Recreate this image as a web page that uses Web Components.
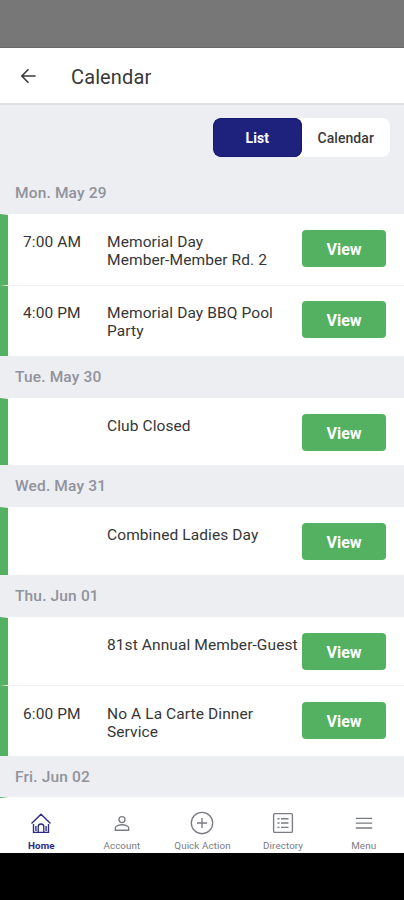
<!DOCTYPE html>
<html lang="en">
<head>
<meta charset="utf-8">
<title>Calendar</title>
<style>
html,body{margin:0;height:100%;background:#000;font-family:Roboto,"Liberation Sans",sans-serif;overflow:hidden}
</style>
</head>
<body>
<club-app></club-app>
<script>
const define = (name, markup, setup) => {
  const tpl = document.createElement('template');
  tpl.innerHTML = markup;
  customElements.define(name, class extends HTMLElement {
    constructor() {
      super();
      this.attachShadow({mode: 'open'}).append(tpl.content.cloneNode(true));
    }
    connectedCallback() { if (setup) setup(this, this.shadowRoot); }
  });
};

define('app-header', `
<style>
:host{display:flex;align-items:center;height:55px;flex:none;background:#fff;border-bottom:2px solid #e0e1e4;box-sizing:content-box;color:#383838;padding-left:20px;gap:35px}
svg{display:block;width:16px;height:16px}
h1{margin:0;font-size:20px;font-weight:400;letter-spacing:.12px;line-height:24px;padding-top:3px}
</style>
<svg viewBox="0 0 16 16" fill="none" stroke="#3c3c3c" stroke-width="1.6"><path d="M8.5 1.2 1.8 8l6.7 6.8M2 8h13.6"/></svg>
<h1><slot></slot></h1>`);

define('view-switch', `
<style>
:host{display:flex;box-sizing:border-box;width:177px;height:39px;border-radius:8px;background:#fff;overflow:hidden;font-size:14px;font-weight:500;letter-spacing:.05px;color:#3a3a3a}
span{flex:1;display:flex;align-items:center;justify-content:center}
.on{background:#1e227c;color:#fff;border-radius:8px;font-weight:700;box-shadow:inset 0 0 0 1px #141873}
</style>
<span class="on"><slot name="on"></slot></span><span><slot></slot></span>`);

define('day-group', `
<style>
:host{display:block}
h2{margin:0;height:var(--head,42px);box-sizing:border-box;padding:0 15px;display:flex;align-items:center;font-size:15.5px;font-weight:500;letter-spacing:.15px;color:#91929b}
</style>
<h2></h2><slot></slot>`, (el, root) => { root.querySelector('h2').textContent = el.getAttribute('day'); });

define('view-button', `
<style>
:host{display:block}
button{display:block;width:84px;height:37px;padding:2px 0 0;border:0;border-radius:4px;background:#53b161;color:#fff;font:700 16px Roboto,sans-serif;letter-spacing:0}
</style>
<button><slot></slot></button>`);

define('event-row', `
<style>
:host{display:grid;grid-template-columns:84px 195px 84px;box-sizing:border-box;height:var(--h,67px);padding-left:15px;border-left:8px solid #53b161;background:#fff;color:#363636;font-size:15.5px;line-height:18px;letter-spacing:.1px;position:relative}
:host([divided]){box-shadow:inset 0 1px #f3f3f5}
:host::before{content:"";position:absolute;left:-8px;top:0;border-style:solid;border-width:1.5px 8px 0 0;border-color:#eceef2 transparent transparent;transform:scaleX(-1)}
:host([divided])::before{border-top-color:#fff}
time,p{margin:0;padding-top:calc(18.5px + var(--shift,0px))}
p{white-space:pre}
view-button{padding-top:calc(16px + var(--shift,0px))}
</style>
<time></time><p></p>`, (el, root) => {
  root.querySelector('time').textContent = el.getAttribute('time') || '';
  const title = el.textContent.trim().replace('|', '\n');
  root.querySelector('p').textContent = title;
  if (title) {
    const button = document.createElement('view-button');
    button.textContent = 'View';
    root.append(button);
  }
});

const icons = {
  home: '<path d="M2.5 12.5 12 3.2l9.5 9.3M4.5 13v8.3h15V13M9.2 21v-5.2a2.8 2.8 0 0 1 5.6 0V21M6.9 15v5M17.1 15v5"/>',
  account: '<circle cx="12" cy="8.6" r="3"/><path d="M5.3 19.2v-2.1c0-2 3.9-3.3 6.7-3.3s6.7 1.3 6.7 3.3v2.1z"/>',
  plus: '<circle cx="12" cy="12" r="10.7"/><path d="M12 7v10M7 12h10"/>',
  list: '<rect x="2.6" y="2.6" width="18.8" height="18.8" rx="1.2"/><path d="M6.5 7.7h2M10 7.7h7.5M6.5 12h2M10 12h7.5M6.5 16.3h2M10 16.3h7.5"/>',
  menu: '<path d="M3.8 7.3h16.4M3.8 12.1h16.4M3.8 17h16.4"/>'
};
define('nav-item', `
<style>
:host{display:flex;flex-direction:column;align-items:center;flex:1;color:#7a7c84;font-size:9.8px;line-height:12px;letter-spacing:.1px;white-space:nowrap}
:host([active]){color:#2b2b83;font-weight:700}
svg{width:24px;height:24px;margin:12.5px 0 5px;fill:none;stroke:currentColor;stroke-width:1.35}
</style>
<svg viewBox="0 0 24 24"></svg><span><slot></slot></span>`, (el, root) => { root.querySelector('svg').innerHTML = icons[el.getAttribute('icon')]; });

define('bottom-nav', `
<style>:host{display:flex;flex:none;height:55px;background:#fff;box-sizing:border-box;padding-left:1px}</style><slot></slot>`);

define('club-app', `
<style>
:host{display:flex;flex-direction:column;height:853px;background:#eceef2}
.status{height:48px;flex:none;background:#777;box-shadow:inset 0 -1px #686868}
main{flex:1;min-height:0;overflow:hidden}
.tools{height:67px;box-sizing:border-box;padding:13px 14px 0 0;display:flex;justify-content:flex-end}
</style>
<div class="status"></div>
<app-header>Calendar</app-header>
<main>
<div class="tools"><view-switch><span slot="on">List</span>Calendar</view-switch></div>
<day-group day="Mon. May 29"><event-row time="7:00 AM" style="--h:71px">Memorial Day|Member-Member Rd. 2</event-row><event-row divided time="4:00 PM" style="--h:71px">Memorial Day BBQ Pool|Party</event-row></day-group>
<day-group day="Tue. May 30"><event-row>Club Closed</event-row></day-group>
<day-group day="Wed. May 31" style="--head:42px"><event-row style="--h:68px">Combined Ladies Day</event-row></day-group>
<day-group day="Thu. Jun 01"><event-row style="--h:68px">81st Annual Member-Guest</event-row><event-row divided time="6:00 PM" style="--h:71px;--shift:1px">No A La Carte Dinner|Service</event-row></day-group>
<day-group day="Fri. Jun 02" style="--head:41px"><event-row></event-row></day-group>
</main>
<bottom-nav><nav-item icon="home" active>Home</nav-item><nav-item icon="account">Account</nav-item><nav-item icon="plus">Quick Action</nav-item><nav-item icon="list">Directory</nav-item><nav-item icon="menu">Menu</nav-item></bottom-nav>`);
</script>
</body>
</html>
